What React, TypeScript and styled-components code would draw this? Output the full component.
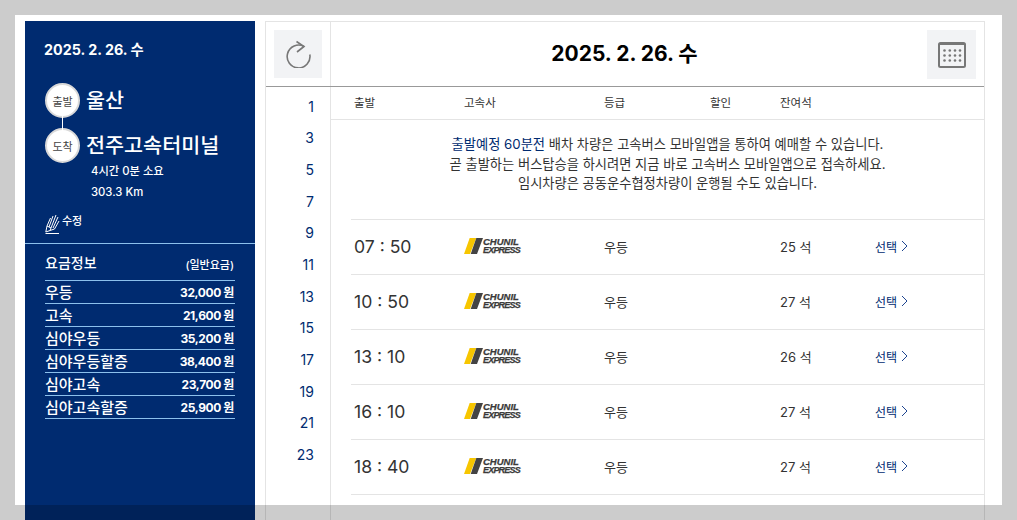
// Modules.
import React from "react";
import styled, { createGlobalStyle } from "styled-components";

// Data.
const HOURS = [1, 3, 5, 7, 9, 11, 13, 15, 17, 19, 21, 23];

const FARES = [
  { name: "우등", price: "32,000 원" },
  { name: "고속", price: "21,600 원" },
  { name: "심야우등", price: "35,200 원" },
  { name: "심야우등할증", price: "38,400 원" },
  { name: "심야고속", price: "23,700 원" },
  { name: "심야고속할증", price: "25,900 원" },
];

const TRIPS = [
  { time: "07 : 50", seats: "25 석" },
  { time: "10 : 50", seats: "27 석" },
  { time: "13 : 10", seats: "26 석" },
  { time: "16 : 10", seats: "27 석" },
  { time: "18 : 40", seats: "27 석" },
];

const COLUMNS = "110px 140px 106px 70px 95px 1fr";

// Style.
const GlobalStyle = createGlobalStyle`
  html, body {
    margin: 0;
    padding: 0;
    height: 520px;
    overflow: hidden;
    background: #fff;
  }
  body {
    font-family: Inter, "Noto Sans CJK KR", sans-serif;
    color: #333;
  }
`;

const Page = styled.div`
  display: flex;
  gap: 10px;
  height: 520px;
  padding: 21px 0 0 25px;
  box-sizing: border-box;
  overflow: hidden;
`;

// Dim layer of the modal: a transparent window with a wide shadow around it.
const ModalWindow = styled.div`
  position: absolute;
  top: 15px;
  left: 15px;
  width: 987px;
  height: 490px;
  box-shadow: 0 0 0 1200px rgba(0, 0, 0, 0.2);
  pointer-events: none;
`;

const Sidebar = styled.aside`
  width: 230px;
  height: 520px;
  flex: none;
  background: #002b70;
  color: #fff;
`;

const SideDate = styled.div`
  padding: 20px 0 0 19px;
  height: 22px;
  font-size: 14.3px;
  font-weight: 700;
  line-height: 18px;
`;

const Route = styled.div`
  position: relative;
  padding: 20px 0 0 20px;
  display: flex;
  flex-direction: column;
  gap: 10px;
`;

const RouteLine = styled.div`
  position: absolute;
  left: 37px;
  top: 50px;
  width: 1px;
  height: 20px;
  background: #fff;
`;

const Stop = styled.div`
  display: flex;
  align-items: center;
  gap: 6px;
  height: 35px;
`;

const StopBadge = styled.span`
  width: 31px;
  height: 31px;
  flex: none;
  border-radius: 50%;
  background: #fff;
  border: 2px solid #d9d9d9;
  color: #444;
  font-size: 11px;
  display: flex;
  align-items: center;
  justify-content: center;
`;

const StopName = styled.span`
  font-size: 20.7px;
  font-weight: 500;
  line-height: 30px;
  white-space: nowrap;
`;

const TripInfo = styled.div`
  margin-top: -2px;
  padding-left: 66px;
  font-size: 11.3px;
  font-weight: 500;
  line-height: 21px;
`;

const EditLink = styled.div`
  display: flex;
  align-items: flex-start;
  gap: 2px;
  padding: 11px 0 0 20px;
  height: 29px;
  font-size: 11px;
  font-weight: 500;
  line-height: 14px;
`;

const SideDivider = styled.hr`
  margin: 0;
  border: 0;
  border-top: 1px solid #8cc0ec;
`;

const FareBox = styled.div`
  padding: 0 20px;
`;

const FareHead = styled.div`
  display: flex;
  justify-content: space-between;
  align-items: flex-start;
  height: 27px;
  padding-top: 9px;
  font-size: 14px;
  font-weight: 500;
  line-height: 20px;
  border-bottom: 1px solid #8cc0ec;
`;

const FareNote = styled.span`
  margin-top: 3px;
  padding-right: 1px;
  font-size: 11px;
  line-height: 18px;
`;

const FareRow = styled.div`
  display: flex;
  justify-content: space-between;
  align-items: center;
  height: 21px;
  padding-bottom: 1px;
  border-bottom: 1px solid #8cc0ec;
`;

const FareName = styled.span`
  font-size: 15px;
  font-weight: 500;
`;

const FarePrice = styled.span`
  padding-right: 1px;
  font-size: 12px;
  font-weight: 700;
  letter-spacing: -0.4px;
`;

const Panel = styled.main`
  width: 718px;
  height: 520px;
  flex: none;
  border: 1px solid #e4e4e4;
  display: flex;
  flex-direction: column;
`;

const PanelHeader = styled.header`
  height: 64px;
  flex: none;
  display: flex;
  border-bottom: 1px solid #999;
`;

const RefreshCell = styled.div`
  width: 65px;
  flex: none;
  padding: 8px;
  box-sizing: border-box;
  border-right: 1px solid #e4e4e4;
`;

const IconButton = styled.button`
  width: 48px;
  height: 48px;
  padding: 0;
  border: 0;
  background: #f2f3f5;
  display: flex;
  align-items: center;
  justify-content: center;
`;

const CalendarButton = styled(IconButton)`
  width: 49px;
  height: 49px;
  margin: 8px 8px 0 0;
`;

const PanelTitle = styled.h1`
  flex: 1;
  margin: 0;
  padding-right: 9px;
  text-align: center;
  color: #000;
  font-size: 21px;
  font-weight: 700;
  line-height: 64px;
`;

const PanelBody = styled.div`
  flex: 1;
  display: flex;
`;

const HourList = styled.ol`
  width: 65px;
  flex: none;
  box-sizing: border-box;
  margin: 0;
  padding: 3.5px 16px 0 0;
  list-style: none;
  border-right: 1px solid #e4e4e4;
`;

const HourItem = styled.li`
  height: 31.7px;
  line-height: 31.7px;
  text-align: right;
  color: #002b70;
  font-size: 14px;
`;

const Schedule = styled.section`
  flex: 1;
  min-width: 0;
`;

const TableHead = styled.div`
  display: grid;
  grid-template-columns: ${COLUMNS};
  height: 32px;
  padding-left: 23px;
  border-bottom: 1px solid #e4e4e4;
  font-size: 11.5px;
  line-height: 32px;
  color: #333;
`;

const Notice = styled.p`
  margin: 0 0 0 20px;
  height: 100px;
  padding-top: 15px;
  box-sizing: border-box;
  border-bottom: 1px solid #e4e4e4;
  text-align: center;
  font-size: 13.25px;
  line-height: 19.7px;
  color: #333;
`;

const NoticeStrong = styled.span`
  color: #002b70;
`;

const TripRow = styled.div`
  display: grid;
  grid-template-columns: ${COLUMNS};
  align-items: center;
  height: 52px;
  margin-left: 20px;
  padding: 0 0 2px 3px;
  border-bottom: 1px solid #e4e4e4;
  font-size: 13px;
  color: #333;
`;

const TripTime = styled.span`
  font-size: 17.6px;
  color: #333;
`;

const SelectLink = styled.a`
  display: flex;
  align-items: center;
  gap: 4px;
  font-size: 12px;
  color: #002b70;
`;

const Logo = styled.div`
  display: flex;
  align-items: center;
  gap: 0;
`;

const LogoText = styled.div`
  font-family: "Liberation Sans", sans-serif;
  font-weight: 700;
  font-style: italic;
  color: #3a3a3a;
  white-space: nowrap;
  -webkit-text-stroke: 0.25px #3a3a3a;
`;

const LogoLine = styled.div<{ $size: number; $track: number }>`
  height: 9px;
  font-size: ${(p) => p.$size}px;
  line-height: 9px;
  letter-spacing: ${(p) => p.$track}px;
`;

// Components.
const PenIcon: React.FC = () => (
  <svg width="15" height="20" viewBox="0 0 15 20" fill="none" stroke="#fff" strokeWidth="1">
    <path d="M2 12 L5.5 4 M4 13 L8 2 M6 14 L11 1 M8 14 L13 3 M9.5 15 L14 7" />
    <path d="M2 12 L0.8 18 L5 16.5 L9.5 15 M0.5 19.5 L14 19.5 M2 12 L6 14 L5 16.5" />
  </svg>
);

const RefreshIcon: React.FC = () => (
  <svg width="26" height="28" viewBox="0 0 26 28" fill="none" stroke="#777" strokeWidth="1.6">
    <path d="M19 6.5 A11.4 11.4 0 1 0 24.8 14.5" />
    <path d="M11.5 1.5 L19 6.5 L12 12" />
  </svg>
);

const CalendarIcon: React.FC = () => (
  <svg width="28" height="26" viewBox="0 0 28 26">
    <rect x="1" y="1" width="26" height="24" rx="1.5" fill="none" stroke="#777" strokeWidth="2" />
    <rect x="1" y="1" width="26" height="2" fill="#777" />
    {[8.5, 13.5, 18.5].map((y) =>
      [6.5, 11.8, 17, 22].map((x) => <circle key={`${x}-${y}`} cx={x} cy={y} r="1.3" fill="#777" />)
    )}
  </svg>
);

const ChevronIcon: React.FC = () => (
  <svg width="7" height="12" viewBox="0 0 7 12" fill="none" stroke="#1f4690" strokeWidth="1">
    <path d="M1 1 L6 6 L1 11" />
  </svg>
);

const ChunilLogo: React.FC = () => (
  <Logo>
    <svg width="19" height="16" viewBox="0 0 19 16">
      <polygon points="0,16 5.7,0 12.3,0 6,16" fill="#f7c600" />
      <polygon points="6.7,16 12.3,0 19,0 13,16" fill="#444" />
    </svg>
    <LogoText>
      <LogoLine $size={9.5} $track={0}>CHUNIL</LogoLine>
      <LogoLine $size={9} $track={-0.8}>EXPRESS</LogoLine>
    </LogoText>
  </Logo>
);

const App: React.FC = () => {
  return (
    <>
      <GlobalStyle />
      <Page>
        <Sidebar>
          <SideDate>2025. 2. 26. 수</SideDate>
          <Route>
            <RouteLine />
            <Stop>
              <StopBadge>출발</StopBadge>
              <StopName>울산</StopName>
            </Stop>
            <Stop>
              <StopBadge>도착</StopBadge>
              <StopName>전주고속터미널</StopName>
            </Stop>
          </Route>
          <TripInfo>
            4시간 0분 소요
            <br />
            303.3 Km
          </TripInfo>
          <EditLink>
            <PenIcon />
            수정
          </EditLink>
          <SideDivider />
          <FareBox>
            <FareHead>
              <span>요금정보</span>
              <FareNote>(일반요금)</FareNote>
            </FareHead>
            {FARES.map((fare) => (
              <FareRow key={fare.name}>
                <FareName>{fare.name}</FareName>
                <FarePrice>{fare.price}</FarePrice>
              </FareRow>
            ))}
          </FareBox>
        </Sidebar>
        <Panel>
          <PanelHeader>
            <RefreshCell>
              <IconButton>
                <RefreshIcon />
              </IconButton>
            </RefreshCell>
            <PanelTitle>2025. 2. 26. 수</PanelTitle>
            <CalendarButton>
              <CalendarIcon />
            </CalendarButton>
          </PanelHeader>
          <PanelBody>
            <HourList>
              {HOURS.map((hour) => (
                <HourItem key={hour}>{hour}</HourItem>
              ))}
            </HourList>
            <Schedule>
              <TableHead>
                <span>출발</span>
                <span>고속사</span>
                <span>등급</span>
                <span>할인</span>
                <span>잔여석</span>
              </TableHead>
              <Notice>
                <NoticeStrong>출발예정 60분전</NoticeStrong> 배차 차량은 고속버스 모바일앱을 통하여 예매할 수 있습니다.
                <br />
                곧 출발하는 버스탑승을 하시려면 지금 바로 고속버스 모바일앱으로 접속하세요.
                <br />
                임시차량은 공동운수협정차량이 운행될 수도 있습니다.
              </Notice>
              {TRIPS.map((trip) => (
                <TripRow key={trip.time}>
                  <TripTime>{trip.time}</TripTime>
                  <ChunilLogo />
                  <span>우등</span>
                  <span />
                  <span>{trip.seats}</span>
                  <SelectLink>
                    선택
                    <ChevronIcon />
                  </SelectLink>
                </TripRow>
              ))}
            </Schedule>
          </PanelBody>
        </Panel>
      </Page>
      <ModalWindow />
    </>
  );
};

export default App;
